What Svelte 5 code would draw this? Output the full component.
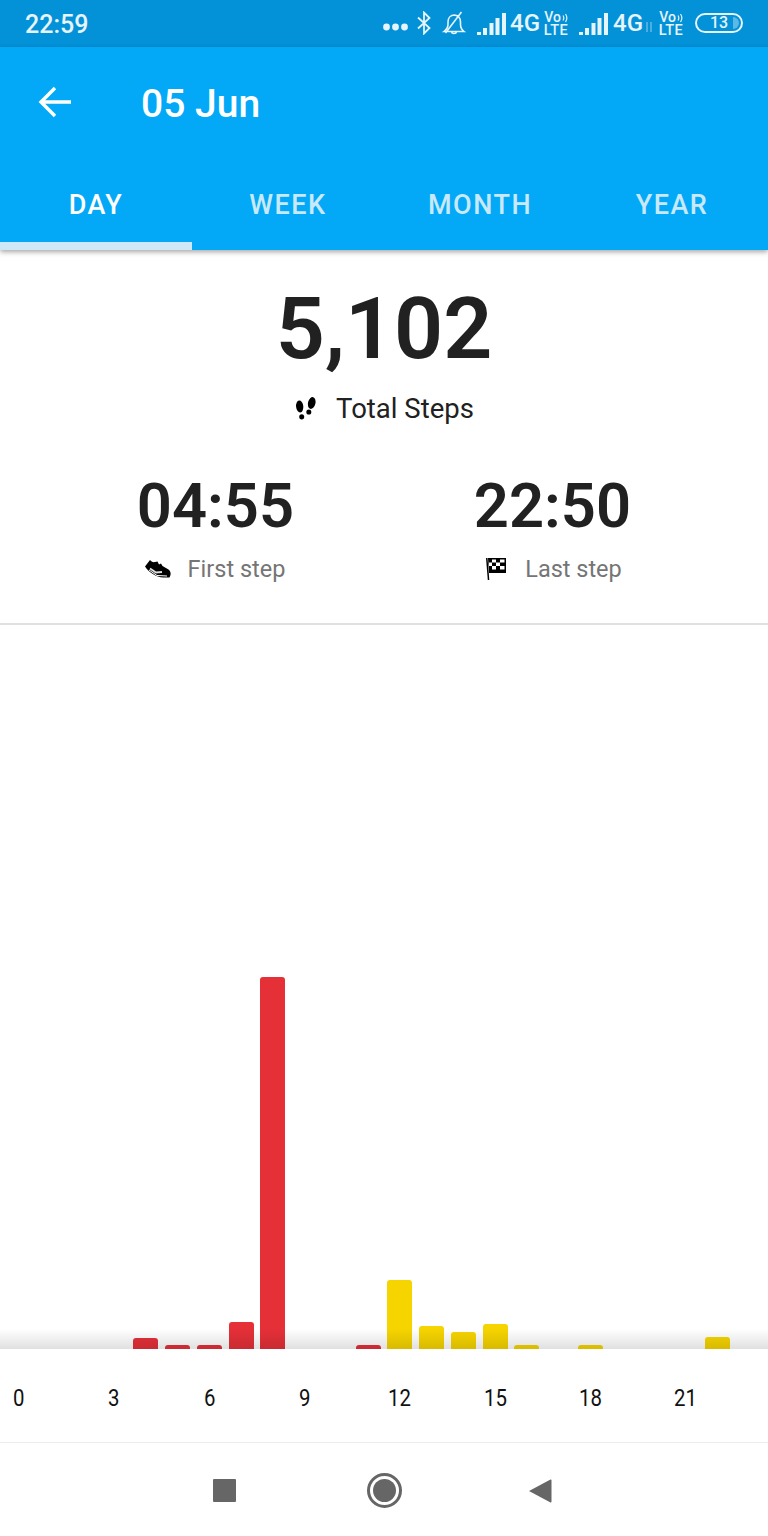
<script>
	const hours = [0, 0, 0, 0, 11, 4, 4, 27, 372, 0, 0, 4, 69, 23, 17, 25, 4, 0, 4, 0, 0, 0, 12, 0];
	const labels = [0, 3, 6, 9, 12, 15, 18, 21];
	const tabs = ['DAY', 'WEEK', 'MONTH', 'YEAR'];
</script>

<div class="page">
	<div class="status">
		<span class="clock">22:59</span>
		<div class="sys">
			<svg class="dots" width="25" height="8" viewBox="0 0 25 8"><circle cx="3.500" cy="4" r="3.400" /><circle cx="12.500" cy="4" r="3.400" /><circle cx="21.500" cy="4" r="3.400" /></svg>
			<svg class="bt" width="16" height="24" viewBox="0 0 16 24"><path d="M2 6.500 13.500 17 8 22.500V1.500L13.500 7 2 17.500" /></svg>
			<svg class="bell" width="24" height="24" viewBox="0 0 24 24"><path d="M2 20.500h20c-2.500-2-3.500-4-3.500-7V11C18.500 7 16 4.500 12.500 4 8.500 4 6 7 6 11v2.500c0 3-1.500 5-4 7ZM9.500 21c.3 2 4.700 2 5 0M3.500 22 19.500 1" /></svg>
			<svg class="signal" width="29" height="22" viewBox="0 0 29 22"><path d="M0 19h4v3H0zM6 15h4v7H6zM12.500 10h4v12h-4zM18.500 5h4v17h-4zM25 0h4v22h-4z" /></svg>
			<b class="net">4G</b>
			<span class="volte">
				<i class="vo">Vo<svg width="6" height="10" viewBox="0 0 6 10"><path d="M1 2.500c1 1.500 1 3.500 0 5M3.500 1c1.700 2.500 1.700 5.500 0 8" /></svg></i>
				<i class="lte">LTE</i>
			</span>
			<svg class="signal two" width="29" height="22" viewBox="0 0 29 22"><path d="M0 19h4v3H0zM6 15h4v7H6zM12.500 10h4v12h-4zM18.500 5h4v17h-4zM25 0h4v22h-4z" /></svg>
			<b class="net two">4G</b>
			<svg class="arrows" width="8" height="12" viewBox="0 0 8 12"><path d="M2 1v10M6 1v10" /></svg>
			<span class="volte last">
				<i class="vo">Vo<svg width="6" height="10" viewBox="0 0 6 10"><path d="M1 2.500c1 1.500 1 3.500 0 5M3.500 1c1.700 2.500 1.700 5.500 0 8" /></svg></i>
				<i class="lte">LTE</i>
			</span>
			<div class="battery"><span>13</span><em></em></div>
		</div>
	</div>

	<header>
		<div class="title-row">
			<svg class="back" width="34" height="32" viewBox="0 0 34 32"><path d="M33 16H4M17 2 3 16l14 14" /></svg>
			<h1>05 Jun</h1>
		</div>
		<nav>
			{#each tabs as tab, i}
				<div class="tab" class:active={i === 0}>{tab}</div>
			{/each}
		</nav>
	</header>

	<section class="summary">
		<div class="total">5,102</div>
		<div class="total-label">
			<svg width="22" height="25" viewBox="0 0 22 25"><ellipse cx="4.700" cy="10.500" rx="3.600" ry="6" transform="rotate(-6 4.700 10.500)" /><ellipse cx="6.700" cy="20.800" rx="2.500" ry="2.600" /><ellipse cx="16.700" cy="7" rx="3.700" ry="6" transform="rotate(14 16.700 7)" /><ellipse cx="13.800" cy="16" rx="2.500" ry="2.600" /></svg>
			<span>Total Steps</span>
		</div>
		<div class="times">
			<div class="time">
				<div class="value">04:55</div>
				<div class="caption">
					<svg width="28" height="20" viewBox="0 0 28 20"><path d="M1 7.500 6 1c1 1.500 3 2.500 5 2l2.500-.5 1.500 3 2-1 1.500 2.500 6 3.500c1.500 1 2.500 3 2 5.500l-1 2.500h-6C12 18 5 13.500 1 7.500Z" /><path class="sole" d="M6 9.500 12 13.500 18 13" /><path class="sole thin" d="M5 11 13 16.500 23 17" /></svg>
					<span>First step</span>
				</div>
			</div>
			<div class="time">
				<div class="value">22:50</div>
				<div class="caption">
					<svg width="24" height="26" viewBox="0 0 24 26"><path d="M2 2h1.500l1.800 22H3.800z" /><path d="M4 2h18v15H5z" /><path class="flag" d="M8 3.500h4v3H8zM16 3.500h4.500v3H16zM12 6.500h4v3.500h-4zM5 6.500h3V10H5zM8 10h4v3.500H8zM16 10h4.500v3.500H16z" /></svg>
					<span>Last step</span>
				</div>
			</div>
		</div>
	</section>

	<section class="chart">
		{#each hours as h, i}
			<div class="slot">
				{#if h > 0}
					<div class="bar" class:yellow={i >= 12} style="height: {h}px"></div>
				{/if}
			</div>
		{/each}
		<div class="fade"></div>
	</section>

	<div class="axis">
		{#each labels as l}
			<span style="grid-column: {l + 1}">{l}</span>
		{/each}
	</div>

	<footer>
		<div class="square"></div>
		<div class="home"><div></div></div>
		<svg width="24" height="26" viewBox="0 0 24 26"><path d="M1 13 22.500 1.500c.8 0 1 .5 1 1v21c0 .5-.5 1-1 1Z" /></svg>
	</footer>
</div>

<style>
	:global(body) {
		margin: 0;
		background: #fff;
	}

	.page {
		width: 768px;
		height: 1536px;
		display: flex;
		flex-direction: column;
		font-family: Roboto, sans-serif;
		overflow: hidden;
	}

	.status {
		height: 47px;
		background: #0391d8;
		color: #e6f4fb;
		display: flex;
		align-items: center;
		justify-content: space-between;
		padding: 0 25px;
		box-sizing: border-box;
	}

	.clock {
		font-size: 25px;
		font-weight: 500;
		position: relative;
		top: 1px;
	}

	.sys {
		display: flex;
		align-items: center;
		position: relative;
		top: -1px;
	}

	.sys svg {
		flex: none;
		fill: #e6f4fb;
	}

	.dots {
		margin-top: 8px;
	}

	.bt {
		margin-left: 8px;
		fill: none !important;
		stroke: #e6f4fb;
		stroke-width: 1.8;
	}

	.bell {
		margin-left: 10px;
		fill: none !important;
		stroke: #e6f4fb;
		stroke-width: 1.6;
	}

	.signal {
		margin-left: 11px;
		margin-top: 2px;
	}

	.net {
		font-size: 24px;
		font-weight: 500;
		margin-left: 4px;
		width: 28px;
		white-space: nowrap;
	}

	.net.two {
		margin-left: 5px;
	}

	.arrows {
		margin: 8px 0 0 4px;
		fill: none !important;
		stroke: #7cc3e8;
		stroke-width: 1.2;
	}

	.volte {
		display: flex;
		flex-direction: column;
		align-items: center;
		width: 24px;
		margin-left: 6px;
		font-weight: 500;
		line-height: 13px;
		margin-top: 3px;
	}

	.volte.last {
		margin-left: 6px;
	}

	.volte i {
		font-style: normal;
		display: flex;
		align-items: center;
	}

	.volte .vo {
		font-size: 14px;
	}

	.volte .lte {
		font-size: 14.500px;
		letter-spacing: 0.5px;
	}

	.volte svg {
		fill: none !important;
		stroke: #e6f4fb;
		stroke-width: 1.200;
		margin-left: 1px;
	}

	.battery {
		width: 48px;
		height: 20px;
		margin-left: 12px;
		border: 2px solid #e6f4fb;
		border-radius: 10px;
		box-sizing: border-box;
		display: flex;
		align-items: center;
		justify-content: center;
		position: relative;
		font-size: 16px;
		font-weight: 500;
	}

	.battery em {
		position: absolute;
		right: 2px;
		top: 2px;
		width: 6px;
		height: 12px;
		border-radius: 0 6px 6px 0;
		background: #5cb8e6;
	}

	header {
		height: 203px;
		background: #03a9f6;
		color: #fff;
		display: flex;
		flex-direction: column;
		box-shadow: 0 2px 5px rgba(0, 0, 0, 0.35);
		position: relative;
	}

	.title-row {
		height: 114px;
		display: flex;
		align-items: center;
		padding-left: 38px;
		box-sizing: border-box;
		padding-bottom: 1px;
	}

	.back {
		fill: none;
		stroke: #fff;
		stroke-width: 3.4;
		margin-top: -4px;
	}

	h1 {
		margin: 0 0 0 69px;
		font-size: 39px;
		font-weight: 500;
	}

	nav {
		flex: 1;
		display: flex;
	}

	.tab {
		width: 192px;
		box-sizing: border-box;
		padding-top: 28px;
		text-align: center;
		font-size: 27px;
		font-weight: 500;
		letter-spacing: 1.500px;
		color: #c9e9fb;
	}

	.tab.active {
		color: #fff;
		border-bottom: 8px solid #cde9f7;
	}

	.summary {
		height: 373px;
		border-bottom: 2px solid #e0e0e0;
		box-sizing: content-box;
		display: flex;
		flex-direction: column;
		align-items: center;
	}

	.total {
		font-size: 86px;
		font-weight: 600;
		color: #212121;
		line-height: 102px;
		margin-top: 28px;
	}

	.total-label {
		display: flex;
		align-items: center;
		gap: 19px;
		font-size: 27.500px;
		color: #212121;
		margin-top: 12px;
		height: 32px;
		margin-left: 1px;
	}

	.times {
		display: flex;
		width: 100%;
		margin-top: 45px;
	}

	.time {
		width: 337px;
		display: flex;
		flex-direction: column;
		align-items: center;
	}

	.time:first-child {
		margin-left: 47px;
	}

	.time:first-child .caption {
		margin-left: -2px;
	}

	.time:last-child .caption {
		margin-left: 1px;
		gap: 17px;
	}

	.value {
		font-size: 61.500px;
		font-weight: 600;
		color: #212121;
		line-height: 74px;
	}

	.caption {
		display: flex;
		align-items: center;
		gap: 16px;
		font-size: 23.500px;
		color: #757575;
		height: 30px;
		margin-top: 11px;
	}

	.caption svg {
		flex: none;
	}

	.sole {
		stroke: #ddd;
		stroke-width: 1.800;
		fill: none;
	}

	.sole.thin {
		stroke: #fff;
		stroke-width: 1;
	}

	.flag {
		fill: #fff;
	}

	.chart {
		height: 724px;
		display: grid;
		grid-template-columns: repeat(24, 31.75px);
		padding: 0 3px;
		align-items: end;
		position: relative;
		box-sizing: border-box;
	}

	.slot {
		display: flex;
		justify-content: center;
	}

	.bar {
		width: 25px;
		background: #e53038;
		border-radius: 3px 3px 0 0;
	}

	.bar.yellow {
		background: #f6d400;
	}

	.fade {
		position: absolute;
		left: 0;
		right: 0;
		bottom: 0;
		height: 20px;
		background: linear-gradient(rgba(0, 0, 0, 0), rgba(0, 0, 0, 0.12));
	}

	.axis {
		height: 94px;
		display: grid;
		grid-template-columns: repeat(24, 31.75px);
		padding: 0 3px;
		border-bottom: 1px solid #ececec;
		box-sizing: border-box;
		grid-template-rows: 94px;
		align-items: center;
		justify-items: center;
		font-size: 24px;
		color: #111;
	}

	.axis span {
		grid-row: 1;
		white-space: nowrap;
		transform: scaleX(0.85);
		margin-top: 3px;
	}

	footer {
		flex: 1;
		display: flex;
		align-items: center;
		padding-left: 213px;
		padding-top: 2px;
	}

	footer svg {
		fill: #666;
		margin-left: 126px;
	}

	.square {
		width: 23px;
		height: 23px;
		background: #666;
		border-radius: 1px;
	}

	.home {
		width: 35px;
		height: 35px;
		border: 3px solid #666;
		border-radius: 50%;
		box-sizing: border-box;
		display: flex;
		align-items: center;
		justify-content: center;
		margin-left: 131px;
	}

	.home div {
		width: 23px;
		height: 23px;
		border-radius: 50%;
		background: #666;
	}
</style>
